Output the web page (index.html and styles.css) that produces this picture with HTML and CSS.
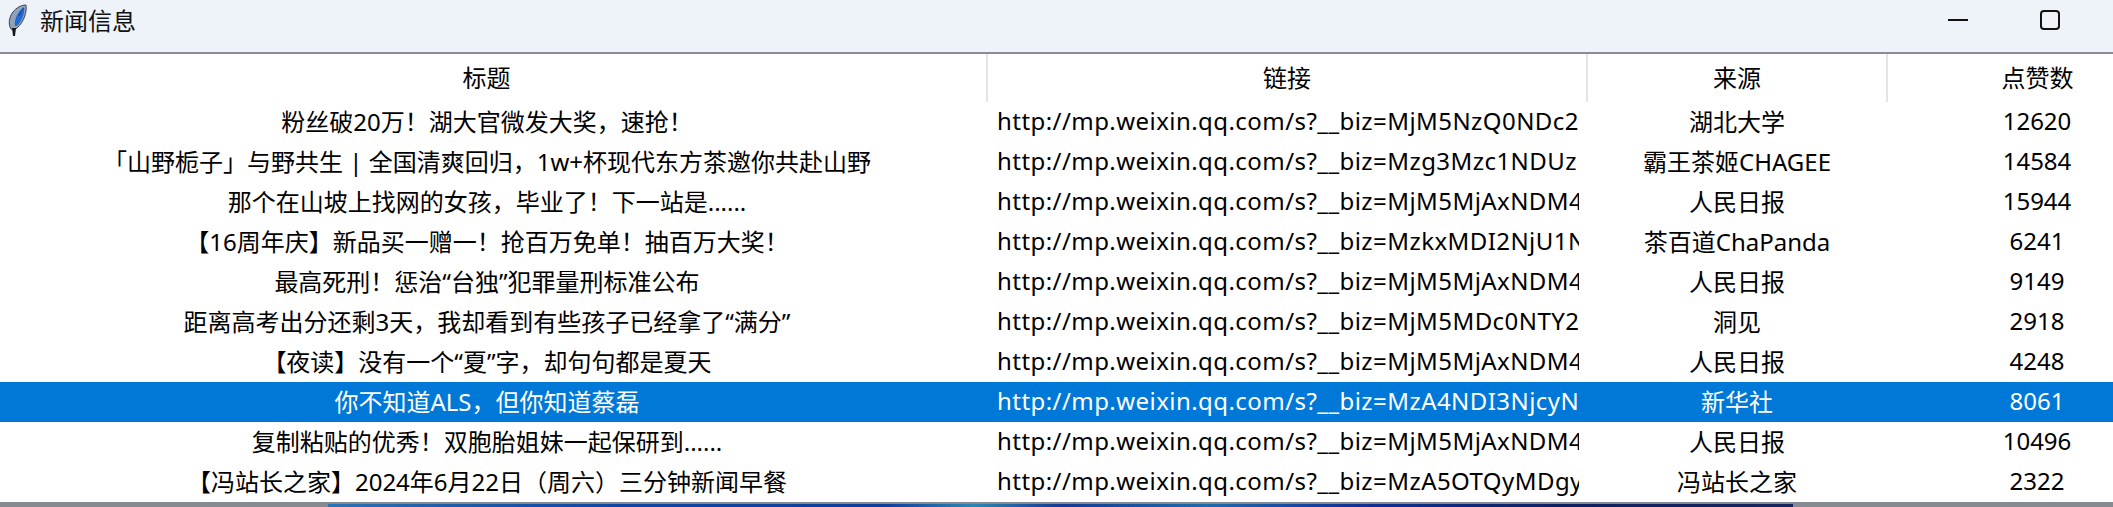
FILE: index.html
```html
<!DOCTYPE html>
<html lang="zh-CN">
<head>
<meta charset="utf-8">
<title>新闻信息</title>
<link rel="stylesheet" href="styles.css">
</head>
<body>
<div class="window">
  <header class="titlebar">
    <svg class="app-icon" viewBox="0 0 24 36" width="24" height="36" aria-hidden="true">
      <path d="M3 26 C0 21 1 14 5 9 C8 5 13 2 18 2 C19 9 16 19 9 25 C7 27 4 27 3 26 Z" fill="#8fa3bb" stroke="#3e4652" stroke-width="1"/>
      <path d="M7 23 C6 17 9 9 16 4 C17 10 14 18 9 23 Z" fill="#2468d2"/>
      <path d="M11 13 C12 10 14 7 16 5" fill="none" stroke="#0f3f9a" stroke-width="1"/>
      <path d="M4 25 L5 33 L7 33 L8 25 Z" fill="#17171b"/>
    </svg>
    <span class="window-title">新闻信息</span>
    <div class="controls">
      <span class="control"><span class="minimize"></span></span>
      <span class="control"><span class="maximize"></span></span>
    </div>
  </header>
  <table class="news">
    <colgroup><col class="c-title"><col class="c-link"><col class="c-source"><col class="c-likes"></colgroup>
    <thead>
      <tr><th class="title">标题</th><th>链接</th><th>来源</th><th class="likes">点赞数</th></tr>
    </thead>
    <tbody>
      <tr><td class="title">粉丝破20万！湖大官微发大奖，速抢！</td><td class="link"><div class="url">http://mp.weixin.qq.com/s?__biz=MjM5NzQ0NDc2</div></td><td>湖北大学</td><td class="likes">12620</td></tr>
      <tr><td class="title">「山野栀子」与野共生 | 全国清爽回归，1w+杯现代东方茶邀你共赴山野</td><td class="link"><div class="url">http://mp.weixin.qq.com/s?__biz=Mzg3Mzc1NDUz</div></td><td>霸王茶姬CHAGEE</td><td class="likes">14584</td></tr>
      <tr><td class="title">那个在山坡上找网的女孩，毕业了！下一站是......</td><td class="link"><div class="url">http://mp.weixin.qq.com/s?__biz=MjM5MjAxNDM4</div></td><td>人民日报</td><td class="likes">15944</td></tr>
      <tr><td class="title">【16周年庆】新品买一赠一！抢百万免单！抽百万大奖！</td><td class="link"><div class="url">http://mp.weixin.qq.com/s?__biz=MzkxMDI2NjU1N</div></td><td>茶百道ChaPanda</td><td class="likes">6241</td></tr>
      <tr><td class="title">最高死刑！惩治“台独”犯罪量刑标准公布</td><td class="link"><div class="url">http://mp.weixin.qq.com/s?__biz=MjM5MjAxNDM4</div></td><td>人民日报</td><td class="likes">9149</td></tr>
      <tr><td class="title">距离高考出分还剩3天，我却看到有些孩子已经拿了“满分”</td><td class="link"><div class="url">http://mp.weixin.qq.com/s?__biz=MjM5MDc0NTY2</div></td><td>洞见</td><td class="likes">2918</td></tr>
      <tr><td class="title">【夜读】没有一个“夏”字，却句句都是夏天</td><td class="link"><div class="url">http://mp.weixin.qq.com/s?__biz=MjM5MjAxNDM4</div></td><td>人民日报</td><td class="likes">4248</td></tr>
      <tr class="selected"><td class="title">你不知道ALS，但你知道蔡磊</td><td class="link"><div class="url">http://mp.weixin.qq.com/s?__biz=MzA4NDI3NjcyN.</div></td><td>新华社</td><td class="likes">8061</td></tr>
      <tr><td class="title">复制粘贴的优秀！双胞胎姐妹一起保研到......</td><td class="link"><div class="url">http://mp.weixin.qq.com/s?__biz=MjM5MjAxNDM4</div></td><td>人民日报</td><td class="likes">10496</td></tr>
      <tr><td class="title">【冯站长之家】2024年6月22日（周六）三分钟新闻早餐</td><td class="link"><div class="url">http://mp.weixin.qq.com/s?__biz=MzA5OTQyMDgy</div></td><td>冯站长之家</td><td class="likes">2322</td></tr>
    </tbody>
  </table>
  <div class="edge"><div class="wallpaper"></div></div>
</div>
</body>
</html>
```

FILE: styles.css
```css
* { box-sizing: border-box; }
html, body { margin: 0; padding: 0; background: #fff; }
body { width: 2113px; height: 507px; overflow: hidden; font-family: "Noto Sans", "Noto Sans CJK SC", sans-serif; font-size: 24px; color: #000; }
.window { display: flex; flex-direction: column; height: 507px; }
.titlebar { display: flex; align-items: flex-start; height: 54px; flex: none; padding: 3px 0 0 8px; background: #eef2f9; border-bottom: 2px solid #8a8a96; }
.app-icon { flex: none; margin-right: 8px; }
.window-title { line-height: 36px; color: #111; }
.controls { display: flex; margin-left: auto; align-items: center; padding-right: 17px; margin-top: -3px; }
.control { display: flex; width: 92px; height: 40px; align-items: center; justify-content: center; }
.minimize { display: block; width: 20px; height: 2px; background: #111; }
.maximize { display: block; width: 20px; height: 20px; border: 2px solid #111; border-radius: 4px; }
.news { width: 2113px; table-layout: fixed; border-collapse: collapse; flex: none; }
.c-title { width: 987px; }
.c-link { width: 600px; }
.c-source { width: 300px; }
.c-likes { width: 226px; }
th, td { padding: 0 0 3px; text-align: center; font-weight: 400; white-space: nowrap; overflow: hidden; }
th { height: 48px; padding-bottom: 4px; border-right: 2px solid #e4e4e4; }
th.likes { border-right: 0; }
td { height: 40px; }
.title { padding-right: 13px; }
.likes { padding-left: 74px; }
td.link { text-align: left; padding: 0 8px 3px 10px; }
.url { overflow: hidden; letter-spacing: 0.44px; }
.selected td { background: #0078d7; color: #fff; }
.edge { flex: 1; display: flex; justify-content: flex-start; padding: 2px 320px 0 328px; background: #878b91; }
.wallpaper { flex: 1; background: linear-gradient(90deg, #2a74b4 0, #1d5cab 8%, #0c45a8 20%, #0d3c9f 38%, #2b86b6 44%, #123a96 50%, #1c6bb0 60%, #10309a 70%, #0b1f63 84%, #14245e 100%); }
```
